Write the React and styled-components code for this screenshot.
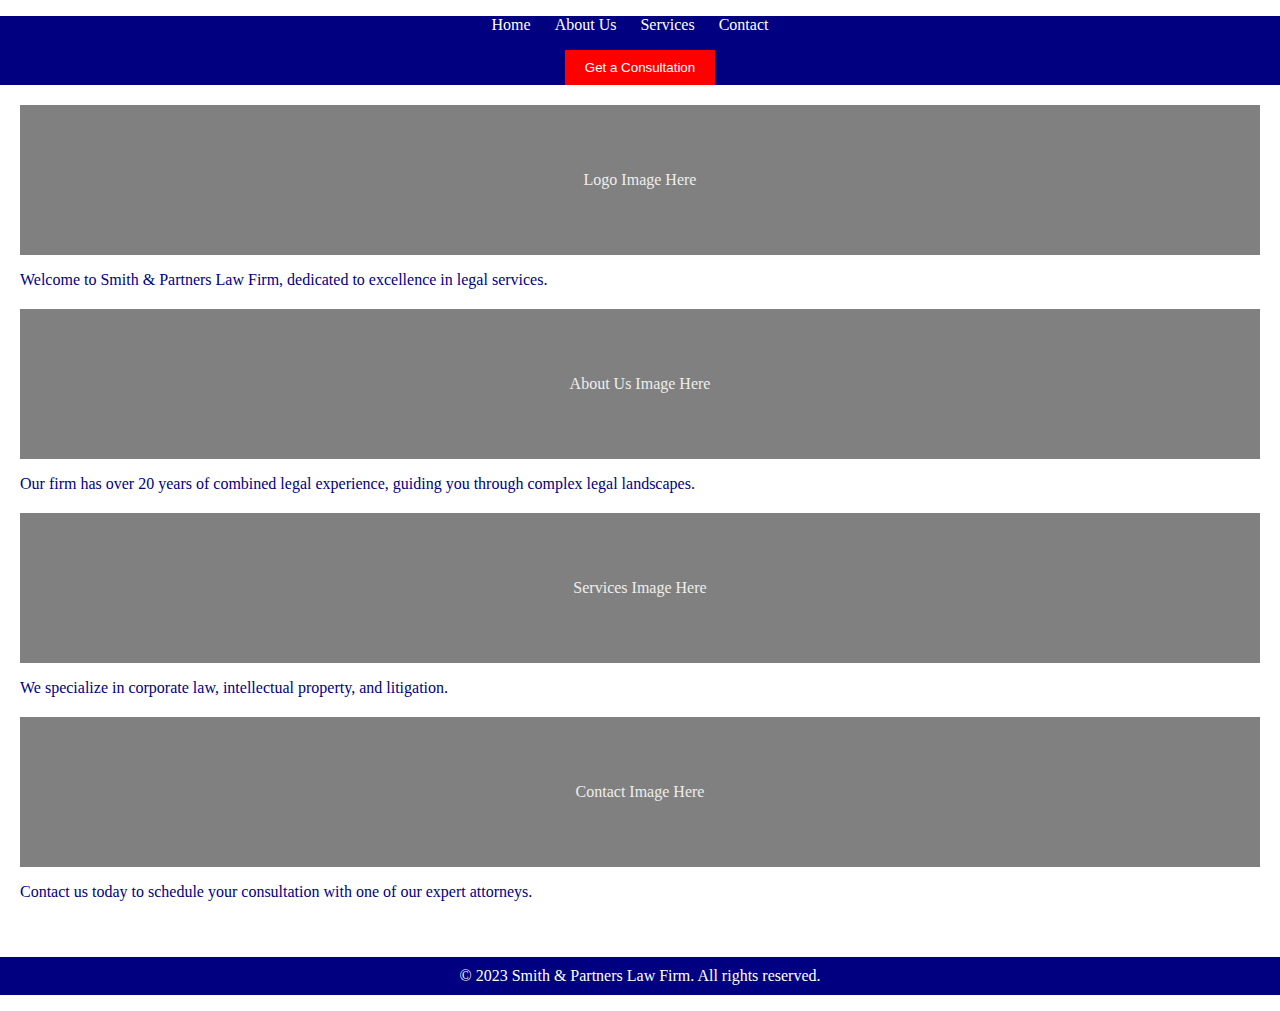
import React from "react";
import styled, { createGlobalStyle } from "styled-components";

const GlobalStyle = createGlobalStyle`
  body {
    margin: 0;
    font-family: "Liberation Serif", "Times New Roman", serif;
    font-size: 16px;
    background: #fff;
  }
`;

const sections = [
  {
    label: "Logo Image Here",
    text: "Welcome to Smith & Partners Law Firm, dedicated to excellence in legal services.",
  },
  {
    label: "About Us Image Here",
    text: "Our firm has over 20 years of combined legal experience, guiding you through complex legal landscapes.",
  },
  {
    label: "Services Image Here",
    text: "We specialize in corporate law, intellectual property, and litigation.",
  },
  {
    label: "Contact Image Here",
    text: "Contact us today to schedule your consultation with one of our expert attorneys.",
  },
];

function App() {
  return (
    <>
      <GlobalStyle />
      <HeaderBar>
        <NavList>
          <NavItem>Home</NavItem>
          <NavItem>About Us</NavItem>
          <NavItem>Services</NavItem>
          <NavItem>Contact</NavItem>
        </NavList>
        <CtaButton>Get a Consultation</CtaButton>
      </HeaderBar>
      <Main>
        {sections.map((s) => (
          <Section key={s.label}>
            <Placeholder>{s.label}</Placeholder>
            <Text>{s.text}</Text>
          </Section>
        ))}
      </Main>
      <Footer>© 2023 Smith &amp; Partners Law Firm. All rights reserved.</Footer>
    </>
  );
}

export default App;

const HeaderBar = styled.header`
  margin-top: 16px;
  background-color: #000080;
  display: flex;
  flex-direction: column;
  align-items: center;
`;

const NavList = styled.ul`
  list-style: none;
  margin: 0 0 16px 0;
  padding: 0 20px 0 0;
  display: flex;
  justify-content: center;
  gap: 24px;
  line-height: 18px;
`;

const NavItem = styled.li`
  color: #fff;
  cursor: pointer;
`;

const CtaButton = styled.button`
  background-color: #ff0000;
  color: #fff;
  border: none;
  padding: 10px 20px;
  font-family: "Liberation Sans", Arial, sans-serif;
  font-size: 13.33px;
  line-height: 15px;
  height: 35px;
  white-space: nowrap;
  cursor: pointer;
`;

const Main = styled.main`
  padding: 20px 20px 20px;
`;

const Section = styled.section`
  margin-bottom: 20px;
`;

const Placeholder = styled.div`
  height: 150px;
  background-color: #808080;
  color: #eee;
  display: flex;
  align-items: center;
  justify-content: center;
`;

const Text = styled.p`
  color: #000080;
  margin: 16px 0;
  line-height: 18px;
`;

const Footer = styled.footer`
  margin-top: 16px;
  background-color: #000080;
  color: #fff;
  text-align: center;
  padding: 10px 0;
  line-height: 18px;
`;
